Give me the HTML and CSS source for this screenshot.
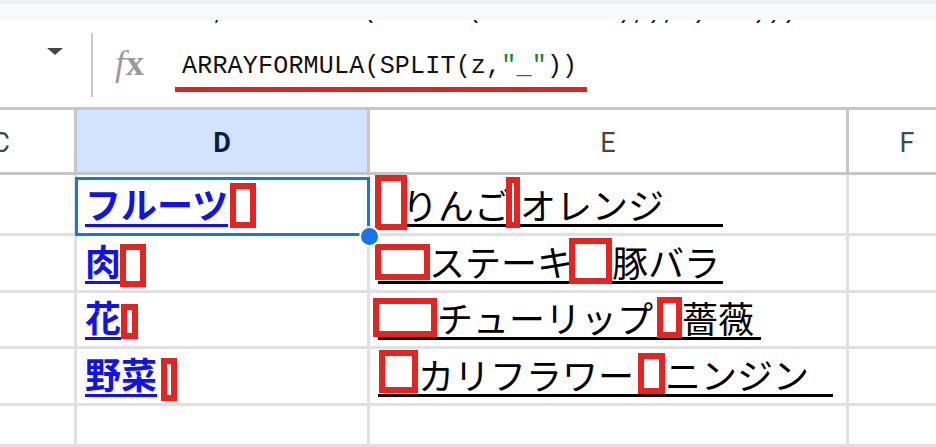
FILE: index.html
```html
<!DOCTYPE html>
<html lang="ja">
<head>
<meta charset="utf-8">
<title>Sheet</title>
<link rel="stylesheet" href="styles.css">
</head>
<body>
<div class="toolbar-edge"></div>

<div class="formula-bar">
  <div class="prev-line"><span>  , TEXTJOIN(FILTER(A2:A5&lt;&gt;""),),z) A1)))</span></div>
  <div class="fb-row">
    <div class="name-box"><span class="caret"></span></div>
    <div class="fb-sep"></div>
    <div class="fx"><i>f</i><b>x</b></div>
    <div class="formula">ARRAYFORMULA(SPLIT(z,<span class="str">"_"</span>))</div>
  </div>
</div>

<div class="sheet">
  <!-- column headers -->
  <div class="cell hdr"><span class="hdr-c">C</span></div>
  <div class="cell hdr hdr-sel">D</div>
  <div class="cell hdr">E</div>
  <div class="cell hdr">F</div>

  <!-- row 1 -->
  <div class="cell"></div>
  <div class="cell active">
    <span class="link">フルーツ</span><span class="mark mk-d1"></span>
    <span class="sel-box"></span><span class="fill-handle"></span>
  </div>
  <div class="cell">
    <span class="uline ul-1"><span class="mark mk-e1a"></span><span class="txt tx-e1a">りんご</span><span class="mark mk-e1b"></span><span class="txt">オレンジ</span></span>
  </div>
  <div class="cell"></div>

  <!-- row 2 -->
  <div class="cell"></div>
  <div class="cell"><span class="link">肉</span><span class="mark mk-d2"></span></div>
  <div class="cell">
    <span class="uline ul-2"><span class="mark mk-e2a"></span><span class="txt tx-e2a">ステーキ</span><span class="mark mk-e2b"></span><span class="txt">豚バラ</span></span>
  </div>
  <div class="cell"></div>

  <!-- row 3 -->
  <div class="cell"></div>
  <div class="cell"><span class="link">花</span><span class="mark mk-d3"></span></div>
  <div class="cell">
    <span class="uline ul-3"><span class="mark mk-e3a"></span><span class="txt">チューリップ</span><span class="mark mk-e3b"></span><span class="txt">薔薇</span></span>
  </div>
  <div class="cell"></div>

  <!-- row 4 -->
  <div class="cell"></div>
  <div class="cell"><span class="link">野菜</span><span class="mark mk-d4"></span></div>
  <div class="cell">
    <span class="uline ul-4"><span class="mark mk-e4a"></span><span class="txt">カリフラワー</span><span class="mark mk-e4b"></span><span class="txt">ニンジン</span></span>
  </div>
  <div class="cell"></div>

  <!-- row 5 -->
  <div class="cell"></div>
  <div class="cell"></div>
  <div class="cell"></div>
  <div class="cell"></div>
</div>
</body>
</html>
```

FILE: styles.css
```css
* { box-sizing: border-box; }

body {
  margin: 0;
  width: 936px;
  height: 447px;
  overflow: hidden;
  background: #fff;
  font-family: Roboto, "Noto Sans CJK JP", sans-serif;
}

/* strip of the toolbar above the formula bar */
.toolbar-edge {
  height: 20px;
  background: #f8f9fb;
  border-top: 4px solid #eef0f3;
}

/* formula bar */
.formula-bar {
  height: 90px;
  border-bottom: 3px solid #c4c7c5;
  background: #fff;
}

/* tail of the previous formula line, scrolled mostly out of view */
.prev-line {
  height: 6px;
  overflow: hidden;
  padding-left: 182px;
  font: 25px/30px "Liberation Mono", monospace;
  color: #111;
  white-space: pre;
}
.prev-line span {
  display: block;
  margin-top: -23px;
}

.fb-row {
  display: flex;
  align-items: flex-start;
  height: 81px;
}

.name-box {
  width: 91px;
  flex: none;
}
.caret {
  display: block;
  width: 0;
  height: 0;
  margin: 22px 0 0 47px;
  border-left: 8px solid transparent;
  border-right: 8px solid transparent;
  border-top: 7px solid #444746;
}

.fb-sep {
  width: 2px;
  height: 64px;
  margin-top: 7px;
  background: #c7c7c7;
  flex: none;
}

.fx {
  width: 60px;
  margin: 22px 0 0 22px;
  flex: none;
  font-family: "Liberation Serif", serif;
  font-size: 36px;
  line-height: 30px;
  color: #9a9a9a;
}
.fx i { font-style: italic; font-weight: 400; }
.fx b { font-style: normal; font-weight: 700; margin-left: 1px; }

.formula {
  margin-top: 26px;
  padding: 0 10px 5px 7px;
  border-bottom: 5px solid #e02424;
  font: 25px/30px "Liberation Mono", monospace;
  letter-spacing: 0.2px;
  color: #111;
  white-space: pre;
}
.formula .str { color: #188038; }

/* grid */
.sheet {
  display: grid;
  width: 968px;
  grid-template-columns: 77px 293px 479px 119px;
  grid-template-rows: 65px 61px 57px 56px 57px 41px;
}

.cell {
  display: flex;
  align-items: flex-end;
  padding: 0 0 6px 8px;
  border-right: 3px solid #e1e1e1;
  border-bottom: 3px solid #e1e1e1;
  white-space: nowrap;
}

.hdr {
  align-items: flex-start;
  justify-content: center;
  padding: 18px 0 0;
  border-color: #c4c7c5;
  font: 400 27px/30px Roboto, sans-serif;
  color: #444746;
}
.hdr-sel {
  background: #d3e3fd;
  color: #041e49;
  font-weight: 700;
}
.hdr-c {
  display: block;
  width: 146px;
  margin-left: -72px;
  text-align: center;
  flex: none;
}

/* cell text */
.link {
  font: 700 36px/36px "Noto Sans CJK JP", sans-serif;
  color: #1212ea;
  padding-bottom: 3px;
  border-bottom: 3px solid #1212ea;
}

.uline {
  display: flex;
  align-items: flex-end;
  border-bottom: 3px solid #000;
}
.txt {
  font: 400 36px/36px "Noto Sans CJK JP", sans-serif;
  color: #000;
  padding-bottom: 2px;
}

.ul-1 { padding-right: 59px; }
.ul-2 { padding-right: 3px; }
.ul-3 { padding-right: 7px; }
.ul-4 { padding-right: 24px; }

.tx-e1a { margin-left: -5px; }
.tx-e2a { margin-left: -1px; }

/* highlighted invisible characters */
.mark {
  flex: none;
  border: 6px solid #e32420;
}
.mk-d1 { width: 26px; height: 45px; margin: 0 0 -1px 2px; }
.mk-d2 { width: 26px; height: 43px; margin: 0 0 -3px -1px; }
.mk-d3 { width: 17px; height: 35px; margin: 0 0 1px 0; }
.mk-d4 { width: 16px; height: 43px; margin: 0 0 -4px 4px; }

.mk-e1a { width: 32px; height: 55px; margin: 0 0 -6px -3px; }
.mk-e1b { width: 14px; height: 51px; margin: 0 0 -4px -4px; }
.mk-e2a { width: 55px; height: 36px; margin: 0 0 1px -3px; }
.mk-e2b { width: 43px; height: 46px; margin: 0 0 -3px -4px; }
.mk-e3a { width: 64px; height: 39px; margin: 0 0 0 -5px; }
.mk-e3b { width: 25px; height: 41px; margin: 0 0 -1px 4px; }
.mk-e4a { width: 39px; height: 43px; margin: 0 0 1px 1px; }
.mk-e4b { width: 27px; height: 41px; margin: 0 0 0 4px; }

/* active cell */
.active {
  position: relative;
  z-index: 2;
}
.sel-box {
  position: absolute;
  left: -2px;
  top: 2px;
  width: 295px;
  height: 59px;
  border: 3px solid #1a73e8;
  pointer-events: none;
}
.fill-handle {
  position: absolute;
  left: 282px;
  top: 51px;
  width: 21px;
  height: 21px;
  border-radius: 50%;
  background: #1a73e8;
  border: 2px solid #fff;
}
```
